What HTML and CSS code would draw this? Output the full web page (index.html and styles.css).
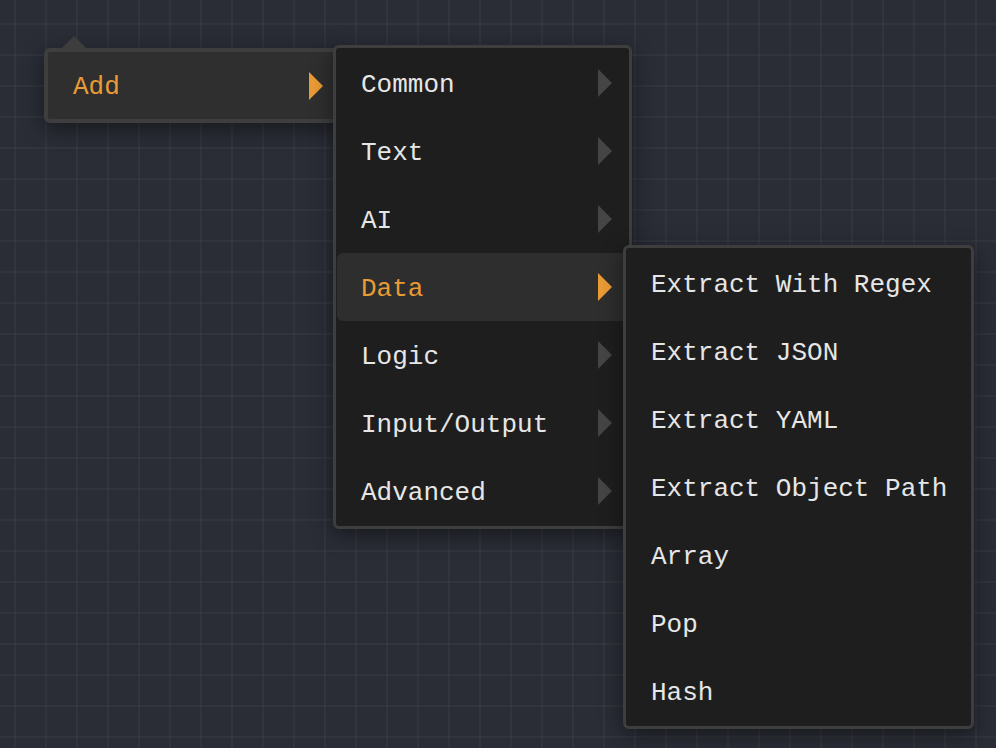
FILE: index.html
```html
<!DOCTYPE html>
<html lang="en">
<head>
<meta charset="utf-8">
<title>Add menu</title>
<link rel="stylesheet" href="styles.css">
</head>
<body>
<div class="canvas">
  <div class="menu menu-root">
    <div class="item active">
      <span class="label">Add</span>
      <svg class="arrow" width="14" height="28" viewBox="0 0 14 28"><polygon points="0,0 14,14 0,28"/></svg>
    </div>
  </div>

  <div class="menu menu-sub">
    <div class="item"><span class="label">Common</span><svg class="arrow" width="14" height="28" viewBox="0 0 14 28"><polygon points="0,0 14,14 0,28"/></svg></div>
    <div class="item"><span class="label">Text</span><svg class="arrow" width="14" height="28" viewBox="0 0 14 28"><polygon points="0,0 14,14 0,28"/></svg></div>
    <div class="item"><span class="label">AI</span><svg class="arrow" width="14" height="28" viewBox="0 0 14 28"><polygon points="0,0 14,14 0,28"/></svg></div>
    <div class="item active highlight"><span class="label">Data</span><svg class="arrow" width="14" height="28" viewBox="0 0 14 28"><polygon points="0,0 14,14 0,28"/></svg></div>
    <div class="item"><span class="label">Logic</span><svg class="arrow" width="14" height="28" viewBox="0 0 14 28"><polygon points="0,0 14,14 0,28"/></svg></div>
    <div class="item"><span class="label">Input/Output</span><svg class="arrow" width="14" height="28" viewBox="0 0 14 28"><polygon points="0,0 14,14 0,28"/></svg></div>
    <div class="item"><span class="label">Advanced</span><svg class="arrow" width="14" height="28" viewBox="0 0 14 28"><polygon points="0,0 14,14 0,28"/></svg></div>
  </div>

  <div class="menu menu-leaf">
    <div class="item"><span class="label">Extract With Regex</span></div>
    <div class="item"><span class="label">Extract JSON</span></div>
    <div class="item"><span class="label">Extract YAML</span></div>
    <div class="item"><span class="label">Extract Object Path</span></div>
    <div class="item"><span class="label">Array</span></div>
    <div class="item"><span class="label">Pop</span></div>
    <div class="item"><span class="label">Hash</span></div>
  </div>
</div>
</body>
</html>
```

FILE: styles.css
```css
html, body {
  margin: 0;
  padding: 0;
}

body {
  width: 996px;
  height: 748px;
  overflow: hidden;
  background-color: #2a2d36;
  font-family: "Liberation Mono", "DejaVu Sans Mono", monospace;
}

.canvas {
  position: relative;
  width: 996px;
  height: 748px;
  background-color: #2a2d36;
  background-image:
    linear-gradient(to right, rgba(255,255,255,0.032) 2px, transparent 2px),
    linear-gradient(to bottom, rgba(255,255,255,0.032) 2px, transparent 2px);
  background-size: 31px 31px;
  background-position: 14px 23px;
}

.menu {
  position: absolute;
  box-sizing: border-box;
  border: 3px solid #3e3e3e;
  border-radius: 6px;
  background: #1e1e1e;
  padding: 1px;
  display: flex;
  flex-direction: column;
  box-shadow: 0 6px 22px rgba(0, 0, 0, 0.45);
}

.menu-root {
  left: 44px;
  top: 48px;
  width: 300px;
  border-width: 4px;
  padding: 0;
  background: #2f2f2f;
  z-index: 1;
}

.menu-root::before {
  content: "";
  position: absolute;
  left: 14px;
  top: -16px;
  border-left: 12px solid transparent;
  border-right: 12px solid transparent;
  border-bottom: 12px solid #3e3e3e;
}

.menu-sub {
  left: 333px;
  top: 45px;
  width: 299px;
  z-index: 2;
}

.menu-leaf {
  left: 623px;
  top: 245px;
  width: 351px;
  z-index: 3;
}

.item {
  display: flex;
  align-items: center;
  justify-content: space-between;
  height: 68px;
  padding: 0 16px 0 24px;
  font-size: 26px;
  color: #e6e6e6;
  border-radius: 6px;
}

.menu-root .item {
  height: 67px;
  padding-left: 25px;
  padding-right: 17px;
}

.menu-leaf .item {
  padding-left: 24px;
}

.label {
  line-height: 1;
  padding-top: 3px;
  white-space: pre;
}

.arrow {
  display: block;
  fill: #454545;
}

.item.active .label {
  color: #e99b36;
}

.item.active .arrow {
  fill: #e99b36;
}

.item.highlight {
  background: #2e2e2e;
}
```
